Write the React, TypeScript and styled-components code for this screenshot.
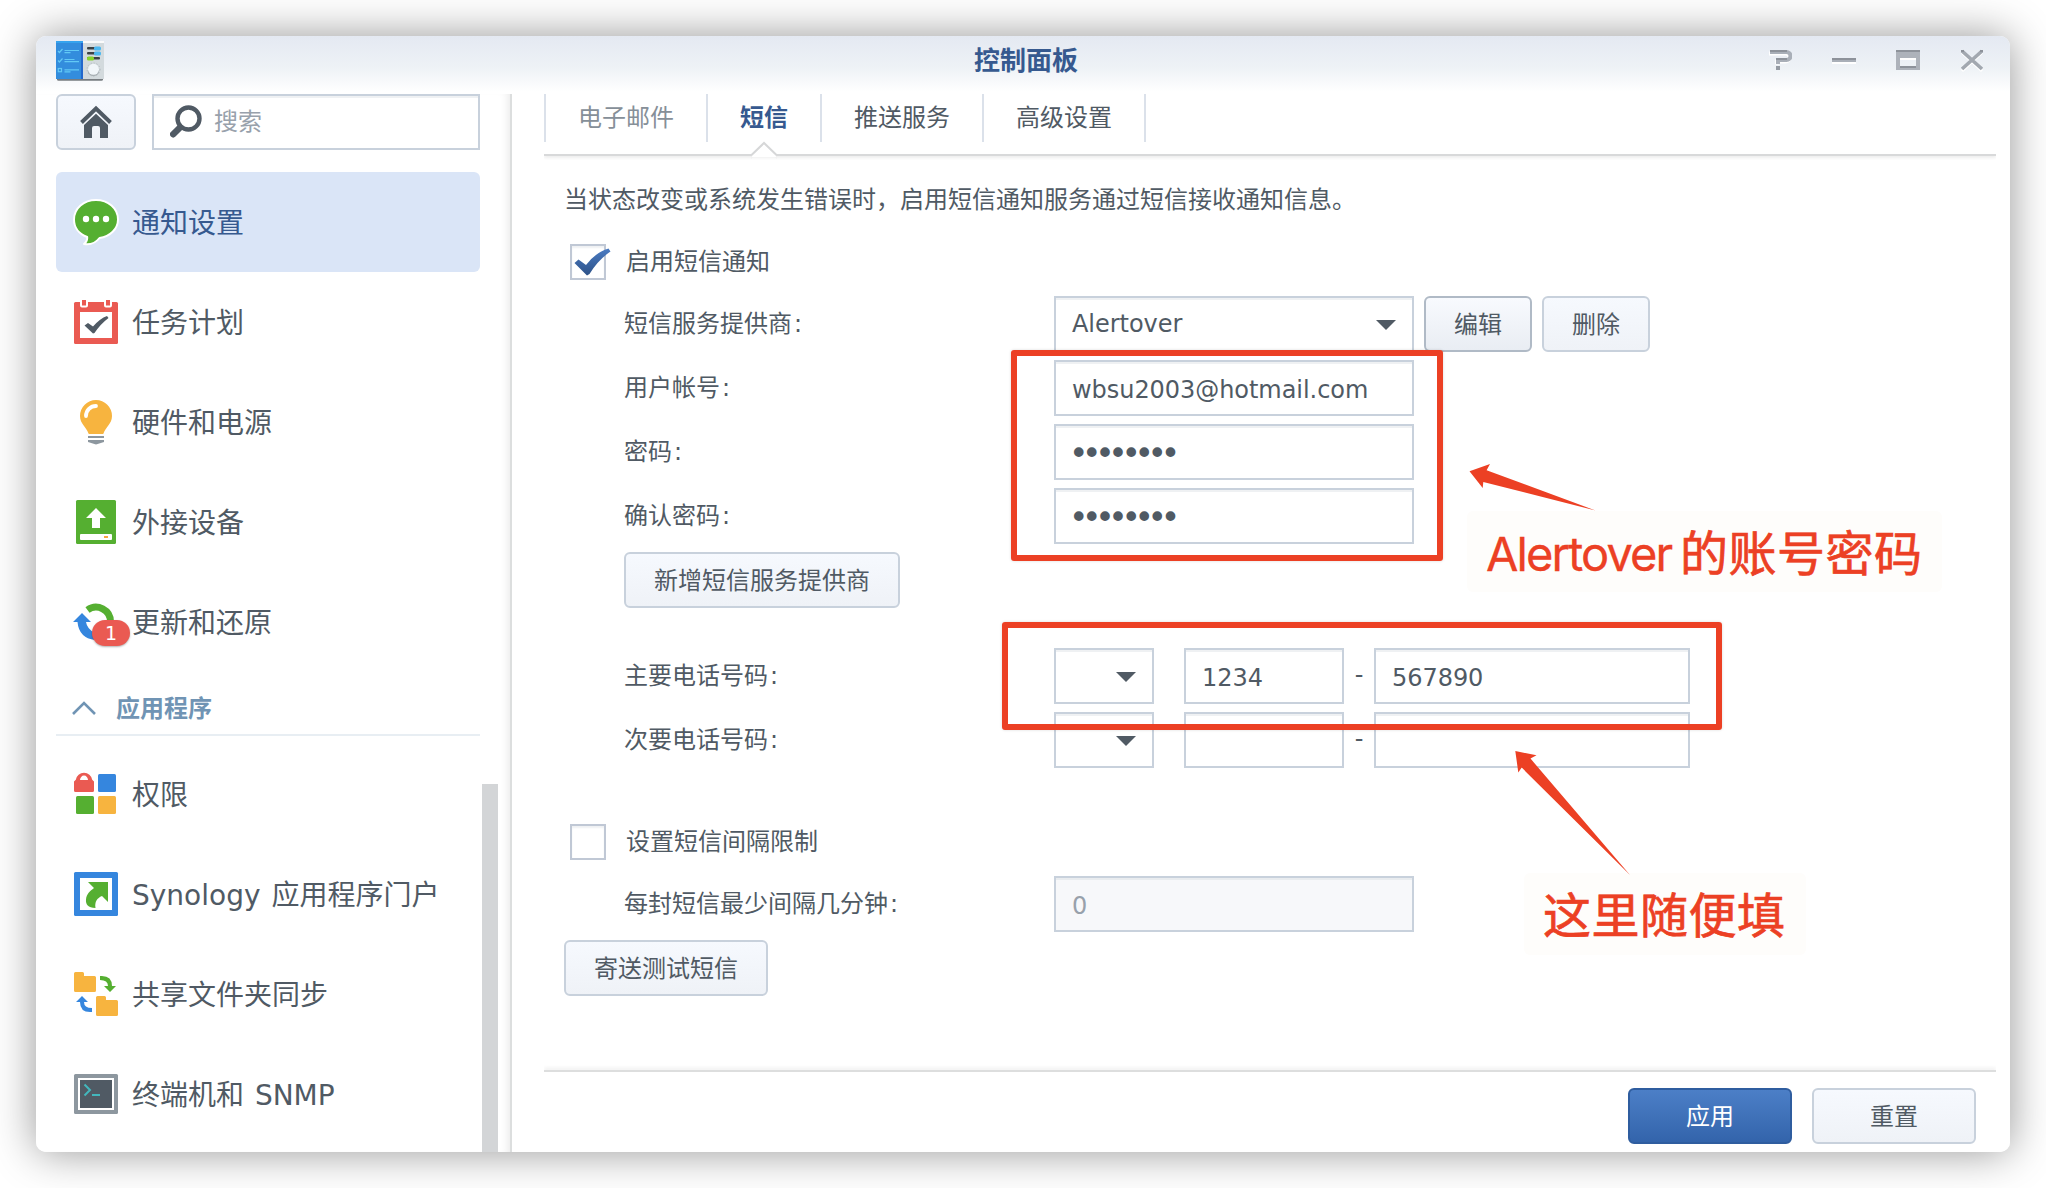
import React from 'react';
import styled, { createGlobalStyle, css } from 'styled-components';

const GlobalStyle = createGlobalStyle`
  *, *::before, *::after { box-sizing: border-box; }
  body {
    margin: 0;
    background: #fff;
    overflow: hidden;
    font-family: 'DejaVu Sans', 'Noto Sans CJK SC', sans-serif;
    font-size: 24px;
    color: #505a64;
  }
  button, input { font: inherit; color: inherit; margin: 0; }
`;

const colors = {
  border: '#c8d1dc',
  text: '#505a64',
  blue: '#36598f',
  red: '#ec4024',
};

const Desktop = styled.div`
  position: relative;
  width: 2046px;
  height: 1188px;
  padding: 36px;
  overflow: hidden;
`;

const Window = styled.div`
  width: 1974px;
  height: 1116px;
  display: flex;
  flex-direction: column;
  border-radius: 10px;
  overflow: hidden;
  background: linear-gradient(180deg, #e4e9f2 0, #eef2f6 32px, #fff 56px, #fff 100%);
  box-shadow: 0 0 44px rgba(0, 0, 0, 0.42);
`;

const TitleBar = styled.header`
  height: 58px;
  flex: none;
  display: grid;
  grid-template-columns: 1fr auto 1fr;
  padding: 0 26px 0 20px;
`;

const AppMark = styled.div`
  padding-top: 4px;
  svg { display: block; }
`;

const Title = styled.h1`
  margin: 0;
  padding-left: 12px;
  font-size: 26px;
  line-height: 50px;
  font-weight: 700;
  color: ${colors.blue};
`;

const WindowControls = styled.div`
  display: flex;
  justify-content: flex-end;
  gap: 40px;
  padding-top: 13px;
  svg { display: block; }
`;

const Body = styled.div`
  flex: 1;
  min-height: 0;
  display: flex;
`;

const Sidebar = styled.aside`
  width: 476px;
  flex: none;
  display: flex;
  justify-content: space-between;
  padding-left: 20px;
  border-right: 2px solid #dcdede;
  box-shadow: inset -8px 0 8px -6px rgba(0, 0, 0, 0.09);
`;

const SideMain = styled.div`
  width: 424px;
`;

const SearchRow = styled.div`
  display: flex;
  gap: 16px;
  margin-bottom: 22px;
`;

const buttonFace = css`
  border: 2px solid ${colors.border};
  border-radius: 6px;
  background: linear-gradient(#f6f9fe, #eff2f7);
`;

const HomeButton = styled.button`
  ${buttonFace}
  width: 80px;
  height: 56px;
  padding: 0;
  display: flex;
  align-items: center;
  justify-content: center;
`;

const SearchBox = styled.div`
  flex: 1;
  height: 56px;
  display: flex;
  align-items: center;
  gap: 12px;
  padding: 0 16px 2px;
  border: 2px solid ${colors.border};
  background: #fff;
  box-shadow: inset 0 2px 0 #eff1f3;
  color: #98a1ab;
`;

const Placeholder = styled.span`
  padding-bottom: 3px;
`;

const NavList = styled.nav`
  display: flex;
  flex-direction: column;
`;

const NavItem = styled.a<{ $active?: boolean }>`
  height: 100px;
  display: flex;
  align-items: center;
  gap: 12px;
  padding-left: 16px;
  border-radius: 6px;
  font-size: 28px;
  line-height: 40px;
  word-spacing: 2px;
  white-space: pre;
  background: ${(p) => (p.$active ? '#dae5f7' : 'transparent')};
  color: ${(p) => (p.$active ? colors.blue : colors.text)};
`;

const NavLabel = styled.span`
  padding-top: 3px;
`;

const NavIcon = styled.span`
  position: relative;
  width: 48px;
  height: 48px;
  flex: none;
  svg { display: block; overflow: visible; }
`;

const Badge = styled.span`
  position: absolute;
  left: 20px;
  top: 22px;
  width: 38px;
  height: 26px;
  border-radius: 13px;
  background: #ea5a52;
  box-shadow: 0 1px 2px rgba(0, 0, 0, 0.3);
  color: #fff;
  font-size: 19px;
  line-height: 26px;
  text-align: center;
`;

const GroupHeader = styled.div`
  height: 64px;
  margin-bottom: 8px;
  display: flex;
  align-items: center;
  gap: 20px;
  padding: 6px 0 0 16px;
  border-bottom: 2px solid #e8eef3;
  font-weight: 700;
  color: #7094b4;
  svg { margin-top: 4px; }
`;

const ScrollTrack = styled.div`
  width: 28px;
  display: flex;
  align-items: flex-end;
`;

const ScrollThumb = styled.div`
  width: 16px;
  height: 368px;
  background: #d3d5d7;
`;

const Content = styled.main`
  flex: 1;
  display: flex;
  flex-direction: column;
  padding: 0 14px 0 32px;
`;

const Tabs = styled.div`
  height: 62px;
  display: flex;
  align-items: flex-start;
  border-bottom: 2px solid #d8d9da;
  box-shadow: 0 2px 3px rgba(0, 0, 0, 0.07);
  clip-path: inset(0 0 -8px 0);
`;

const Tab = styled.div<{ $active?: boolean; $dim?: boolean }>`
  position: relative;
  height: 48px;
  padding: 0 32px;
  line-height: 48px;
  border-right: 2px solid #dbe1ea;
  &:first-child { border-left: 2px solid #dbe1ea; }
  color: ${(p) => (p.$active ? colors.blue : p.$dim ? '#868f98' : colors.text)};
  font-weight: ${(p) => (p.$active ? 700 : 400)};
  svg {
    position: absolute;
    left: 42px;
    top: 46px;
  }
`;

const Form = styled.section`
  flex: 1;
  padding: 26px 0 0 20px;
`;

const Description = styled.p`
  margin: 0;
  height: 36px;
  line-height: 36px;
`;

const CheckRow = styled.label<{ $top: number }>`
  display: flex;
  align-items: center;
  gap: 20px;
  height: 36px;
  margin-top: ${(p) => p.$top}px;
  padding-left: 6px;
  line-height: 34px;
`;

const CheckBox = styled.span`
  width: 36px;
  height: 36px;
  border: 2px solid #c0c8d5;
  background: #fff;
  box-shadow: inset 0 2px 2px #eff1f3;
  svg { display: block; overflow: visible; }
`;

const Fields = styled.div<{ $top: number }>`
  display: grid;
  gap: 8px;
  margin-top: ${(p) => p.$top}px;
  padding-left: 60px;
`;

const Field = styled.div`
  display: grid;
  grid-template-columns: 430px auto;
  height: 56px;
`;

const LabelText = styled.span`
  line-height: 56px;
  &::after {
    content: ':';
    margin-left: 2px;
  }
`;

const Controls = styled.div`
  display: flex;
`;

const Input = styled.div<{ $width: number; $disabled?: boolean; $gap?: number; $select?: boolean }>`
  display: flex;
  align-items: center;
  justify-content: space-between;
  width: ${(p) => p.$width}px;
  height: 56px;
  margin-right: ${(p) => p.$gap ?? 0}px;
  padding: ${(p) => (p.$select ? 0 : 3)}px 16px 0;
  border: 2px solid ${colors.border};
  background: ${(p) => (p.$disabled ? '#f7f8fa' : '#fff')};
  color: ${(p) => (p.$disabled ? '#98a1ab' : colors.text)};
  box-shadow: inset 0 2px 0 ${(p) => (p.$disabled ? '#e9ecef' : '#eff1f3')};
  letter-spacing: -0.05px;
`;

const Dots = styled.span`
  margin-left: -3px;
  font-size: 33px;
  line-height: 40px;
  letter-spacing: -6.37px;
`;

const Caret = styled.span`
  margin: 2px 0 0 auto;
  border: 10px solid transparent;
  border-top-color: ${colors.text};
  border-bottom-width: 0;
`;

const Dash = styled.span`
  width: 30px;
  line-height: 54px;
  text-align: center;
`;

const Button = styled.button<{ $width: number; $primary?: boolean; $hover?: boolean; $gap?: number }>`
  ${buttonFace}
  width: ${(p) => p.$width}px;
  height: 56px;
  padding: 2px 0 0;
  margin-left: ${(p) => p.$gap ?? 0}px;
  line-height: 50px;
  text-align: center;
  ${(p) => p.$hover && css`
    border-color: #b0bac6;
    background: linear-gradient(#f8fafe, #e9edf3);
  `}
  ${(p) => p.$primary && css`
    border-color: #2f5d9f;
    background: linear-gradient(#4c7fc7, #3364ab);
    color: #fff;
  `}
`;

const Indent = styled.div<{ $top: number; $left: number }>`
  padding-left: ${(p) => p.$left}px;
  margin-top: ${(p) => p.$top}px;
  height: 56px;
`;

const Footer = styled.footer`
  height: 82px;
  flex: none;
  display: flex;
  justify-content: flex-end;
  padding: 16px 20px 0 0;
  border-top: 2px solid #dddede;
  box-shadow: 0 -3px 3px rgba(0, 0, 0, 0.045);
  clip-path: inset(-8px 0 0 0);
`;

const Highlight = styled.div<{ $x: number; $y: number; $w: number; $h: number }>`
  position: absolute;
  left: ${(p) => p.$x}px;
  top: ${(p) => p.$y}px;
  width: ${(p) => p.$w}px;
  height: ${(p) => p.$h}px;
  border: 6px solid ${colors.red};
  border-radius: 3px;
  box-shadow: 0 0 3px rgba(0, 0, 0, 0.15);
`;

const Arrows = styled.svg`
  position: absolute;
  left: 0;
  top: 0;
  pointer-events: none;
`;

const Note = styled.div<{ $x: number; $y: number; $w: number; $h: number }>`
  position: absolute;
  left: ${(p) => p.$x}px;
  top: ${(p) => p.$y}px;
  width: ${(p) => p.$w}px;
  height: ${(p) => p.$h}px;
  display: flex;
  align-items: center;
  padding: 4px 0 0 19px;
  border-radius: 6px;
  background: #fefdfb;
  color: ${colors.red};
  font-family: Inter, 'Noto Sans CJK SC', sans-serif;
  font-size: 48px;
  line-height: 60px;
  white-space: nowrap;
`;

const NoteLatin = styled.span`
  width: 194px;
  font-size: 47px;
  letter-spacing: -1.9px;
  -webkit-text-stroke: 0.3px ${colors.red};
`;

const NoteText = styled.span`
  letter-spacing: 0.5px;
  -webkit-text-stroke: 0.7px ${colors.red};
`;

const AppIcon = () => (
  <svg width="50" height="44" viewBox="0 0 50 44">
    <rect x="1" y="37" width="46" height="3.800" rx="1.500" fill="#777c80" />
    <rect x="26" y="1" width="22" height="38" fill="#d3dadd" />
    <rect x="26" y="1" width="22" height="2" fill="#fbfbfb" />
    <rect x="0" y="1" width="27" height="38" fill="#338ddd" />
    <rect x="0" y="1" width="27" height="2" fill="#36a3ee" />
    <rect x="25" y="3" width="2" height="36" fill="#2368cc" />
    <g stroke="#62c9f5" strokeWidth="1.2" fill="none">
      <path d="M8.5 10.5H23M8.5 12.6H14.5M8.5 19.5H18.5M8.5 21.6H23M8.5 29.8H23M8.5 31.8H14.5" />
      <path d="M2 11l1.4 1.5L6.5 9M2 20.500l1.400 1.500L6.500 18.500" />
      <rect x="2.300" y="28.500" width="3.200" height="3.200" />
    </g>
    <rect x="31" y="7" width="13" height="2.600" rx="1" fill="#3b4245" />
    <rect x="38" y="6.600" width="7" height="3.800" rx="1.500" fill="#4db8f0" />
    <rect x="31" y="12" width="13" height="2.600" rx="1" fill="#3b4245" />
    <rect x="38" y="11.600" width="7" height="3.800" rx="1.500" fill="#4db8f0" />
    <rect x="31" y="17" width="13" height="2.600" rx="1" fill="#3b4245" />
    <rect x="31" y="16.600" width="7" height="3.800" rx="1.500" fill="#86d42c" />
    <circle cx="37.500" cy="29.500" r="6.500" fill="none" stroke="#adb6ba" strokeWidth="1" strokeDasharray="1 2" />
    <circle cx="37.500" cy="30.500" r="5.700" fill="#a9b1b5" />
    <circle cx="37.500" cy="29.300" r="5.500" fill="#f1f6f9" />
  </svg>
);

const HelpIcon = () => (
  <svg width="24" height="24" viewBox="0 0 24 24">
    <path d="M1 3H17.500a3.500 3.500 0 0 1 0 8H9V14" fill="none" stroke="#fff" strokeWidth="4" transform="translate(0 1.500)" />
    <path d="M2 3H18.500a3.800 3.800 0 0 1 0 8H10V15" stroke="#a9afb8" strokeWidth="4" fill="none" />
    <path d="M2 2H19M8 10H19" stroke="#8d929a" strokeWidth="2" />
    <rect x="8" y="17" width="4" height="4" fill="#959ba3" />
  </svg>
);

const MinimizeIcon = () => (
  <svg width="24" height="24" viewBox="0 0 24 24">
    <rect y="13" width="24" height="2" fill="#fff" />
    <rect y="9" width="24" height="4" fill="#a9afb8" />
    <rect y="9" width="24" height="2" fill="#8d929a" />
  </svg>
);

const MaximizeIcon = () => (
  <svg width="24" height="24" viewBox="0 0 24 24">
    <path d="M0 1H24V21H0ZM4 9V17H20V9Z" fill="#adb2ba" fillRule="evenodd" />
    <rect y="1" width="24" height="2" fill="#8d929a" />
    <rect x="4" y="17" width="16" height="2" fill="#8d929a" />
    <rect x="4" y="9" width="16" height="2" fill="#fff" />
  </svg>
);

const CloseIcon = () => (
  <svg width="24" height="24" viewBox="0 0 24 24">
    <path d="M2 3.500L22 22M22 3.500L2 22" stroke="#fff" strokeWidth="3" />
    <path d="M2 2L22 20M22 2L2 20" stroke="#a2a8b0" strokeWidth="3.600" />
    <path d="M1 2H4M20 2H23" stroke="#8d929a" strokeWidth="2" />
  </svg>
);

const HomeIcon = () => (
  <svg width="32" height="34" viewBox="0 0 32 34">
    <path d="M1.500 17.500L16 3.500L30.500 17.500" fill="none" stroke="#505a64" strokeWidth="4" />
    <path d="M4 20L16 8.800L28 20V33H20V23a2 2 0 0 0-2-2H14a2 2 0 0 0-2 2V33H4Z" fill="#505a64" />
  </svg>
);

const SearchIcon = () => (
  <svg width="32" height="34" viewBox="0 0 32 34">
    <circle cx="18.500" cy="14.500" r="11" fill="none" stroke="#505a64" strokeWidth="4.400" />
    <path d="M10 23.500L3.200 30.200" stroke="#505a64" strokeWidth="6.500" strokeLinecap="round" />
  </svg>
);

const Icon = ({ children }: { children: React.ReactNode }) => (
  <svg width="48" height="48" viewBox="0 0 48 48">{children}</svg>
);

const ChatIcon = () => (
  <Icon>
    <path
      d="M24 2C36 2 46 10 46 21.500C46 31 38 38.500 27.500 40C24 44.500 18 47 12 46C14.500 44 15.500 42 15.200 39C7 36 2 29.500 2 21.500C2 10 12 2 24 2Z"
      fill="#55af31" stroke="#fff" strokeWidth="2" strokeLinejoin="round"
    />
    <circle cx="14" cy="21" r="3.200" fill="#fff" />
    <circle cx="24" cy="21" r="3.200" fill="#fff" />
    <circle cx="34" cy="21" r="3.200" fill="#fff" />
  </Icon>
);

const TaskIcon = () => (
  <Icon>
    <rect x="2" y="4" width="44" height="42" rx="1.500" fill="#ea5a52" />
    <rect x="8" y="14" width="32" height="26" fill="#fff" />
    <path d="M8 2h8v5.500a2 2 0 0 1-2 2h-4a2 2 0 0 1-2-2ZM32 2h8v5.500a2 2 0 0 1-2 2h-4a2 2 0 0 1-2-2Z" fill="#fff" />
    <path d="M10 2h4v5.500h-4ZM34 2h4v5.500h-4Z" fill="#ea5a52" />
    <path d="M12.500 27.500L16 25L21 28.500Q28 20.500 35 18L36.500 20Q28.500 26 22.500 35L21 35.500Z" fill="#505a64" />
  </Icon>
);

const BulbIcon = () => (
  <Icon>
    <path d="M24 2a16 16 0 0 1 16 16c0 8-6.500 11-8.500 17.500Q31.300 36 30.500 36H17.500Q16.700 36 16.500 35.500C14.500 29 8 26 8 18A16 16 0 0 1 24 2Z" fill="#f7b43f" />
    <path d="M14 18a10 10 0 0 1 10-10" fill="none" stroke="#fff" strokeWidth="3.800" strokeLinecap="round" />
    <rect x="16" y="38" width="16" height="2" fill="#8d979f" />
    <path d="M16 42H32V44L24 46.500L16 44Z" fill="#8d979f" />
  </Icon>
);

const DeviceIcon = () => (
  <Icon>
    <rect x="4" y="2" width="40" height="44" rx="1.500" fill="#55af31" />
    <path d="M24 10L34 20H28V30H20V20H14Z" fill="#fff" />
    <rect x="8" y="36" width="32" height="6" rx="1" fill="#fff" />
    <rect x="32" y="38" width="4" height="2" fill="#f7a53f" />
  </Icon>
);

const UpdateIcon = () => (
  <Icon>
    <path d="M15.500 12A14.500 14.500 0 0 1 38.500 24" fill="none" stroke="#55af31" strokeWidth="7" />
    <path d="M1 24L10 15L19 24H14Q15 31 23 35V42Q7 40 5.500 24Z" fill="#3586de" />
  </Icon>
);

const PrivilegeIcon = () => (
  <Icon>
    <rect x="26" y="4" width="18" height="18" rx="1.500" fill="#3586de" />
    <rect x="4" y="26" width="18" height="18" rx="1.500" fill="#55af31" />
    <rect x="26" y="26" width="18" height="18" rx="1.500" fill="#f7b43f" />
    <path d="M3.800 9.800a8.300 8.300 0 0 1 16.400 0L22 11.500V20.500a1.500 1.500 0 0 1-1.500 1.500H3.500A1.500 1.500 0 0 1 2 20.500V11.500Z" fill="#ea5a52" />
    <path d="M8 10a4 4.400 0 0 1 8 0Z" fill="#fff" />
  </Icon>
);

const PortalIcon = () => (
  <Icon>
    <rect x="2" y="2" width="44" height="44" rx="1.500" fill="#3586de" />
    <rect x="8" y="8" width="32" height="32" fill="#fff" />
    <path d="M16 12H36V32L30 26C25 28 22.500 32 23.500 38C16 38 13.500 34 14 29.500C14.500 24 18 21 22 18Z" fill="#55af31" />
  </Icon>
);

const FolderSyncIcon = () => (
  <Icon>
    <path d="M2 3.500A1.500 1.500 0 0 1 3.500 2H10.500A1.500 1.500 0 0 1 12 3.500V6H22.500A1.500 1.500 0 0 1 24 7.500V20.500A1.500 1.500 0 0 1 22.500 22H3.500A1.500 1.500 0 0 1 2 20.500Z" fill="#f7b43f" />
    <path d="M24 27.500A1.500 1.500 0 0 1 25.500 26H32.500A1.500 1.500 0 0 1 34 27.500V30H44.500A1.500 1.500 0 0 1 46 31.500V44.500A1.500 1.500 0 0 1 44.500 46H25.500A1.500 1.500 0 0 1 24 44.500Z" fill="#f7b43f" />
    <path d="M28 6Q40 5 40 16H44L38 22L32 16H36Q36 10 28 10Z" fill="#55af31" />
    <path d="M20 42Q8 43 8 32H4L10 26L16 32H12Q12 38 20 38Z" fill="#3586de" />
  </Icon>
);

const TerminalIcon = () => (
  <Icon>
    <rect x="2" y="4" width="44" height="40" rx="1.500" fill="#8d979f" />
    <rect x="6" y="8" width="36" height="32" fill="#fff" />
    <rect x="8" y="10" width="32" height="28" fill="#505a64" />
    <path d="M12.500 14.500L18 20L12.500 25.500M20 25H28" fill="none" stroke="#43b7bd" strokeWidth="2" />
  </Icon>
);

const ChevronIcon = () => (
  <svg width="24" height="16" viewBox="0 0 24 16">
    <path d="M1 14L12 3L23 14" fill="none" stroke="#7094b4" strokeWidth="2.600" />
  </svg>
);

const CheckIcon = () => (
  <svg width="36" height="32" viewBox="0 0 36 32">
    <defs>
      <linearGradient id="tick" x1="0" y1="0" x2="0" y2="1">
        <stop offset="0" stopColor="#4a7bc2" />
        <stop offset="1" stopColor="#2d5288" />
      </linearGradient>
    </defs>
    <path d="M2.500 17L6.500 13.500L14 19Q24 6 36.500 2.500L38.500 5.500Q26 14 17.500 28L15 29.500Z" fill="url(#tick)" />
  </svg>
);

const TabNotch = () => (
  <svg width="28" height="22" viewBox="0 0 28 22">
    <path d="M1 15L14 3L27 15L27 19L14 6L1 19Z" fill="#f1f1f1" />
    <path d="M2 17V15L14 3L26 15V17Z" fill="#fff" />
    <path d="M1 15.500L14 3L27 15.500" fill="none" stroke="#d6d7d8" strokeWidth="2" />
  </svg>
);

type Item = { label: string; icon: React.ReactNode; active?: boolean; badge?: number };

const systemItems: Item[] = [
  { label: '通知设置', icon: <ChatIcon />, active: true },
  { label: '任务计划', icon: <TaskIcon /> },
  { label: '硬件和电源', icon: <BulbIcon /> },
  { label: '外接设备', icon: <DeviceIcon /> },
  { label: '更新和还原', icon: <UpdateIcon />, badge: 1 },
];

const appItems: Item[] = [
  { label: '权限', icon: <PrivilegeIcon /> },
  { label: 'Synology 应用程序门户', icon: <PortalIcon /> },
  { label: '共享文件夹同步', icon: <FolderSyncIcon /> },
  { label: '终端机和 SNMP', icon: <TerminalIcon /> },
];

const Nav = ({ items }: { items: Item[] }) => (
  <NavList>
    {items.map((item) => (
      <NavItem key={item.label} $active={item.active}>
        <NavIcon>
          {item.icon}
          {item.badge && <Badge>{item.badge}</Badge>}
        </NavIcon>
        <NavLabel>{item.label}</NavLabel>
      </NavItem>
    ))}
  </NavList>
);

const PhoneControls = ({ area, number }: { area?: string; number?: string }) => (
  <Controls>
    <Input $width={100} $gap={30} $select><Caret /></Input>
    <Input $width={160}>{area}</Input>
    <Dash>-</Dash>
    <Input $width={316}>{number}</Input>
  </Controls>
);

export default function App() {
  return (
    <Desktop>
      <GlobalStyle />
      <Window>
        <TitleBar>
          <AppMark><AppIcon /></AppMark>
          <Title>控制面板</Title>
          <WindowControls>
            <HelpIcon />
            <MinimizeIcon />
            <MaximizeIcon />
            <CloseIcon />
          </WindowControls>
        </TitleBar>
        <Body>
          <Sidebar>
            <SideMain>
              <SearchRow>
                <HomeButton><HomeIcon /></HomeButton>
                <SearchBox><SearchIcon /><Placeholder>搜索</Placeholder></SearchBox>
              </SearchRow>
              <Nav items={systemItems} />
              <GroupHeader><ChevronIcon />应用程序</GroupHeader>
              <Nav items={appItems} />
            </SideMain>
            <ScrollTrack><ScrollThumb /></ScrollTrack>
          </Sidebar>
          <Content>
            <Tabs>
              <Tab $dim>电子邮件</Tab>
              <Tab $active>短信<TabNotch /></Tab>
              <Tab>推送服务</Tab>
              <Tab>高级设置</Tab>
            </Tabs>
            <Form>
              <Description>当状态改变或系统发生错误时，启用短信通知服务通过短信接收通知信息。</Description>
              <CheckRow $top={26}><CheckBox><CheckIcon /></CheckBox>启用短信通知</CheckRow>
              <Fields $top={16}>
                <Field>
                  <LabelText>短信服务提供商</LabelText>
                  <Controls>
                    <Input $width={360} $select>Alertover<Caret /></Input>
                    <Button $width={108} $gap={10} $hover>编辑</Button>
                    <Button $width={108} $gap={10}>删除</Button>
                  </Controls>
                </Field>
                <Field>
                  <LabelText>用户帐号</LabelText>
                  <Input $width={360}>wbsu2003@hotmail.com</Input>
                </Field>
                <Field>
                  <LabelText>密码</LabelText>
                  <Input $width={360}><Dots>••••••••</Dots></Input>
                </Field>
                <Field>
                  <LabelText>确认密码</LabelText>
                  <Input $width={360}><Dots>••••••••</Dots></Input>
                </Field>
              </Fields>
              <Indent $top={8} $left={60}><Button $width={276}>新增短信服务提供商</Button></Indent>
              <Fields $top={40}>
                <Field>
                  <LabelText>主要电话号码</LabelText>
                  <PhoneControls area="1234" number="567890" />
                </Field>
                <Field>
                  <LabelText>次要电话号码</LabelText>
                  <PhoneControls />
                </Field>
              </Fields>
              <CheckRow $top={56}><CheckBox />设置短信间隔限制</CheckRow>
              <Fields $top={16}>
                <Field>
                  <LabelText>每封短信最少间隔几分钟</LabelText>
                  <Input $width={360} $disabled>0</Input>
                </Field>
              </Fields>
              <Indent $top={8} $left={0}><Button $width={204}>寄送测试短信</Button></Indent>
            </Form>
            <Footer>
              <Button $width={164} $primary>应用</Button>
              <Button $width={164} $gap={20}>重置</Button>
            </Footer>
          </Content>
        </Body>
      </Window>
      <Highlight $x={1011} $y={350} $w={432} $h={211} />
      <Highlight $x={1002} $y={622} $w={720} $h={108} />
      <Note $x={1467} $y={511} $w={475} $h={81}>
        <NoteLatin>Alertover</NoteLatin>
        <NoteText>的账号密码</NoteText>
      </Note>
      <Note $x={1524} $y={873} $w={282} $h={82}>
        <NoteText>这里随便填</NoteText>
      </Note>
      <Arrows width="2046" height="1188" viewBox="0 0 2046 1188">
        <path d="M1469.500 471.300L1490 464L1486.600 470.300L1595.500 510.500L1483.300 482L1482.700 488Z" fill={colors.red} />
        <path d="M1515.300 751L1536.500 755.300L1530.500 758.600L1630 875L1521.700 767.600L1518.300 772.500Z" fill={colors.red} />
      </Arrows>
    </Desktop>
  );
}
